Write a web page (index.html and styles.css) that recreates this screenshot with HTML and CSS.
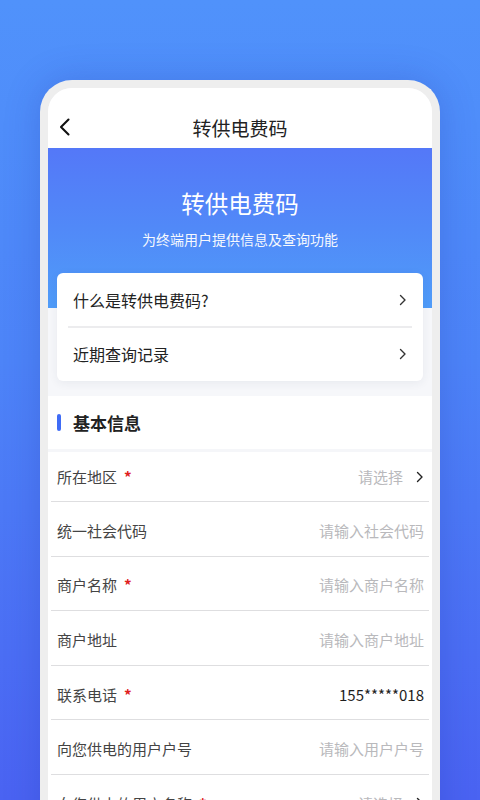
FILE: index.html
```html
<!DOCTYPE html>
<html lang="zh-CN">
<head>
<meta charset="utf-8">
<title>转供电费码</title>
<link rel="stylesheet" href="styles.css">
</head>
<body>
<div class="phone">
  <div class="screen">
    <div class="nav">
      <svg class="back" width="12" height="18" viewBox="0 0 12 18"><path d="M10.5 1.5 L3 9 L10.5 16.5" fill="none" stroke="#111" stroke-width="2.1" stroke-linecap="round" stroke-linejoin="round"/></svg>
      <div class="nav-title">转供电费码</div>
    </div>
    <div class="hero">
      <div class="hero-title">转供电费码</div>
      <div class="hero-sub">为终端用户提供信息及查询功能</div>
    </div>
    <div class="card-wrap">
      <div class="card">
        <div class="card-row">
          <span>什么是转供电费码?</span>
          <svg class="chev" width="8" height="12" viewBox="0 0 8 12"><path d="M1.5 1.5 L6 6 L1.5 10.5" fill="none" stroke="#333" stroke-width="1.4" stroke-linecap="round" stroke-linejoin="round"/></svg>
        </div>
        <div class="card-div"></div>
        <div class="card-row">
          <span>近期查询记录</span>
          <svg class="chev" width="8" height="12" viewBox="0 0 8 12"><path d="M1.5 1.5 L6 6 L1.5 10.5" fill="none" stroke="#333" stroke-width="1.4" stroke-linecap="round" stroke-linejoin="round"/></svg>
        </div>
      </div>
    </div>
    <div class="form">
      <div class="section-head"><span class="bar"></span><span class="section-title">基本信息</span></div>
      <div class="sep"></div>
      <div class="row first">
        <span class="label">所在地区<i class="req">*</i></span>
        <span class="val ph">请选择<svg class="chev sel" width="8" height="12" viewBox="0 0 8 12"><path d="M1.5 1.5 L6 6 L1.5 10.5" fill="none" stroke="#222" stroke-width="1.4" stroke-linecap="round" stroke-linejoin="round"/></svg></span>
      </div>
      <div class="row">
        <span class="label">统一社会代码</span>
        <span class="val ph">请输入社会代码</span>
      </div>
      <div class="row">
        <span class="label">商户名称<i class="req">*</i></span>
        <span class="val ph">请输入商户名称</span>
      </div>
      <div class="row">
        <span class="label">商户地址</span>
        <span class="val ph">请输入商户地址</span>
      </div>
      <div class="row">
        <span class="label">联系电话<i class="req">*</i></span>
        <span class="val num">155*****018</span>
      </div>
      <div class="row">
        <span class="label">向您供电的用户户号</span>
        <span class="val ph">请输入用户户号</span>
      </div>
      <div class="row">
        <span class="label">向您供电的用户名称<i class="req">*</i></span>
        <span class="val ph">请选择<svg class="chev sel" width="8" height="12" viewBox="0 0 8 12"><path d="M1.5 1.5 L6 6 L1.5 10.5" fill="none" stroke="#222" stroke-width="1.4" stroke-linecap="round" stroke-linejoin="round"/></svg></span>
      </div>
    </div>
  </div>
</div>
</body>
</html>
```
FILE: styles.css
```css
* { box-sizing: border-box; }
html, body { margin: 0; padding: 0; }
body {
  width: 480px;
  height: 800px;
  overflow: hidden;
  background: linear-gradient(180deg, #5092fb 0%, #4d84f8 45%, #4a63f2 100%);
  font-family: "Noto Sans CJK SC", "Noto Sans", sans-serif;
  padding-top: 80px;
}
.phone {
  width: 400px;
  height: 760px;
  margin: 0 auto;
  border: 8px solid #eeeeee;
  border-bottom: none;
  border-radius: 32px 32px 0 0;
  background: #eeeeee;
  box-shadow: 0 0 36px rgba(30, 40, 160, 0.22);
}
.screen {
  height: 100%;
  background: #f6f7fa;
  border-radius: 24px 24px 0 0;
  overflow: hidden;
}
.nav {
  height: 60px;
  padding-top: 20px;
  background: #fff;
  display: flex;
  align-items: center;
  justify-content: center;
  position: relative;
}
.back { position: absolute; left: 10px; top: 30px; }
.nav-title { font-size: 19px; color: #222; line-height: 40px; }
.hero {
  height: 160px;
  background: linear-gradient(180deg, #5478f8 0%, #5189f8 50%, #4f9cf9 100%);
  color: #fff;
  text-align: center;
  padding-top: 38px;
}
.hero-title { font-size: 23.5px; line-height: 34px; }
.hero-sub { font-size: 14px; line-height: 20px; margin-top: 9px; opacity: 0.95; }
.card-wrap { padding: 0 9px; margin-top: -35px; }
.card {
  background: #fff;
  border-radius: 6px;
  box-shadow: 0 2px 10px rgba(40, 50, 90, 0.07);
  padding: 0 11px;
}
.card-row {
  height: 54px;
  display: flex;
  align-items: center;
  justify-content: space-between;
  padding: 0 5px;
  font-size: 16px;
  color: #222;
}
.card-div { height: 2px; background: #ececee; margin: -1px 0; }
.form { margin-top: 15px; background: #fff; }
.section-head {
  height: 53px;
  display: flex;
  align-items: center;
  padding-left: 9px;
}
.bar { width: 4px; height: 17px; border-radius: 2px; background: #3f6cf6; margin-right: 12px; }
.section-title { font-size: 17px; font-weight: 700; color: #222; }
.sep { height: 3px; background: #f5f6f9; }
.row {
  height: 54.6px;
  margin: 0 3px;
  padding: 3px 5px 0 6px;
  border-bottom: 1.5px solid #dedee0;
  display: flex;
  align-items: center;
  justify-content: space-between;
  font-size: 15px;
}
.row.first { height: 50px; padding-top: 0; }
.label { color: #444; }
.req { font-style: normal; font-weight: 700; color: #e02020; margin-left: 7px; }
.val { display: flex; align-items: center; }
.ph { color: #b9b9bc; }
.num { color: #1e1e1e; }
.sel { margin-left: 13px; margin-right: 0; }
```
